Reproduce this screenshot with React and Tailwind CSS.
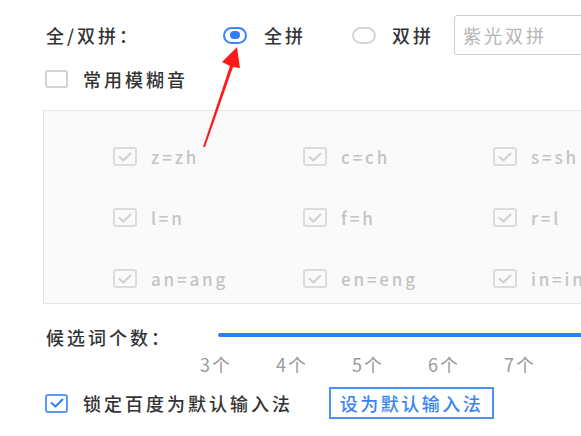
import { useState } from "react";

const fuzzy = [
  ["z=zh", "c=ch", "s=sh"],
  ["l=n", "f=h", "r=l"],
  ["an=ang", "en=eng", "in=ing"],
];

const counts = ["3个", "4个", "5个", "6个", "7个", "8个"];

function Tick({ color }) {
  return (
    <svg width="14" height="10" viewBox="0 0 14 10">
      <path d="M1.5 5 L5.5 8.5 L12.5 1.5" fill="none" stroke={color} strokeWidth="2" strokeLinecap="round" strokeLinejoin="round" />
    </svg>
  );
}

function Radio({ checked }) {
  return (
    <div
      className={
        "w-[24px] h-[17px] shrink-0 rounded-full border-2 flex items-center justify-center " +
        (checked ? "border-[#3b87f5]" : "border-[#d6d6d6]")
      }
    >
      {checked && <div className="w-[10px] h-[8px] rounded-full bg-[#2f7ff2]" />}
    </div>
  );
}

export default function App() {
  const [mode, setMode] = useState("full");
  const [fuzzyOn, setFuzzyOn] = useState(false);
  const [locked, setLocked] = useState(true);

  return (
    <div
      className="relative w-[581px] h-[436px] overflow-hidden bg-white text-[18px] font-medium text-[#333] tracking-[3px] whitespace-nowrap"
      style={{ fontFamily: '"Noto Sans CJK SC", "Noto Sans", sans-serif' }}
    >
      <div className="flex items-center h-[40px] mt-[15px] pl-[46px]">
        <div className="w-[177px] shrink-0 leading-none">全/双拼：</div>
        <button className="flex items-center shrink-0" onClick={() => setMode("full")}>
          <Radio checked={mode === "full"} />
          <span className="ml-[17px] leading-none">全拼</span>
        </button>
        <button className="flex items-center shrink-0 ml-[46px]" onClick={() => setMode("double")}>
          <Radio checked={mode === "double"} />
          <span className="ml-[16px] leading-none">双拼</span>
        </button>
        <div className="ml-[20px] w-[160px] h-[40px] border border-[#cfcfcf] rounded-[3px] flex items-center pl-[8px] text-[#b5b5b5] font-normal leading-none shrink-0">
          紫光双拼
        </div>
      </div>

      <div className="flex items-center mt-[15px] pl-[45px] h-[18px]">
        <button
          className="w-[23px] h-[18px] shrink-0 border-2 border-[#d2d2d2] rounded-[3px] flex items-center justify-center"
          onClick={() => setFuzzyOn(!fuzzyOn)}
        >
          {fuzzyOn && <Tick color="#2f7ff2" />}
        </button>
        <span className="ml-[15px] leading-none">常用模糊音</span>
      </div>

      <div className="ml-[43px] mt-[22px] w-[560px] h-[194px] bg-[#fafafa] border border-[#e6e6e6] pt-[36px] pl-[69px] flex flex-col gap-[42px]">
        {fuzzy.map((row, i) => (
          <div key={i} className="flex h-[19px]">
            {row.map((item) => (
              <div key={item} className="w-[190px] flex items-center shrink-0">
                <div className="w-[24px] h-[19px] shrink-0 border-2 border-[#dcdcdc] rounded-[3px] flex items-center justify-center">
                  <Tick color="#cfcfcf" />
                </div>
                <span className="ml-[14px] text-[#c4c4c4] text-[17px] leading-none tracking-[2.8px]">{item}</span>
              </div>
            ))}
          </div>
        ))}
      </div>

      <div className="flex items-center mt-[22px] pl-[46px] h-[22px]">
        <div className="w-[172px] shrink-0 leading-none">候选词个数：</div>
        <div className="flex-1 h-[4px] bg-[#2f7ff2] rounded-l-full mt-[-4px]" />
      </div>
      <div className="flex pl-[200px] mt-[7px] h-[20px] text-[#9a9a9a] font-normal tracking-[2px] leading-none">
        {counts.map((c) => (
          <div key={c} className="w-[76px] shrink-0">{c}</div>
        ))}
      </div>

      <div className="flex items-center mt-[12px] pl-[45px] h-[32px]">
        <button
          className={
            "w-[23px] h-[19px] shrink-0 border-2 rounded-[3px] flex items-center justify-center " +
            (locked ? "border-[#5b9af7]" : "border-[#cccccc]")
          }
          onClick={() => setLocked(!locked)}
        >
          {locked && <Tick color="#2f7ff2" />}
        </button>
        <span className="ml-[15px] leading-none">锁定百度为默认输入法</span>
        <button className="ml-[36px] h-[32px] w-[165px] shrink-0 border-2 border-[#4a90f5] text-[#3a84f2] leading-none tracking-[2.5px] flex items-center justify-center">
          设为默认输入法
        </button>
      </div>

      <svg className="absolute left-0 top-0 pointer-events-none" width="581" height="436">
        <polygon points="203,147 230,66 222,62 237,47 240,68 233,67 205,147" fill="#ff1a1a" />
      </svg>
    </div>
  );
}
